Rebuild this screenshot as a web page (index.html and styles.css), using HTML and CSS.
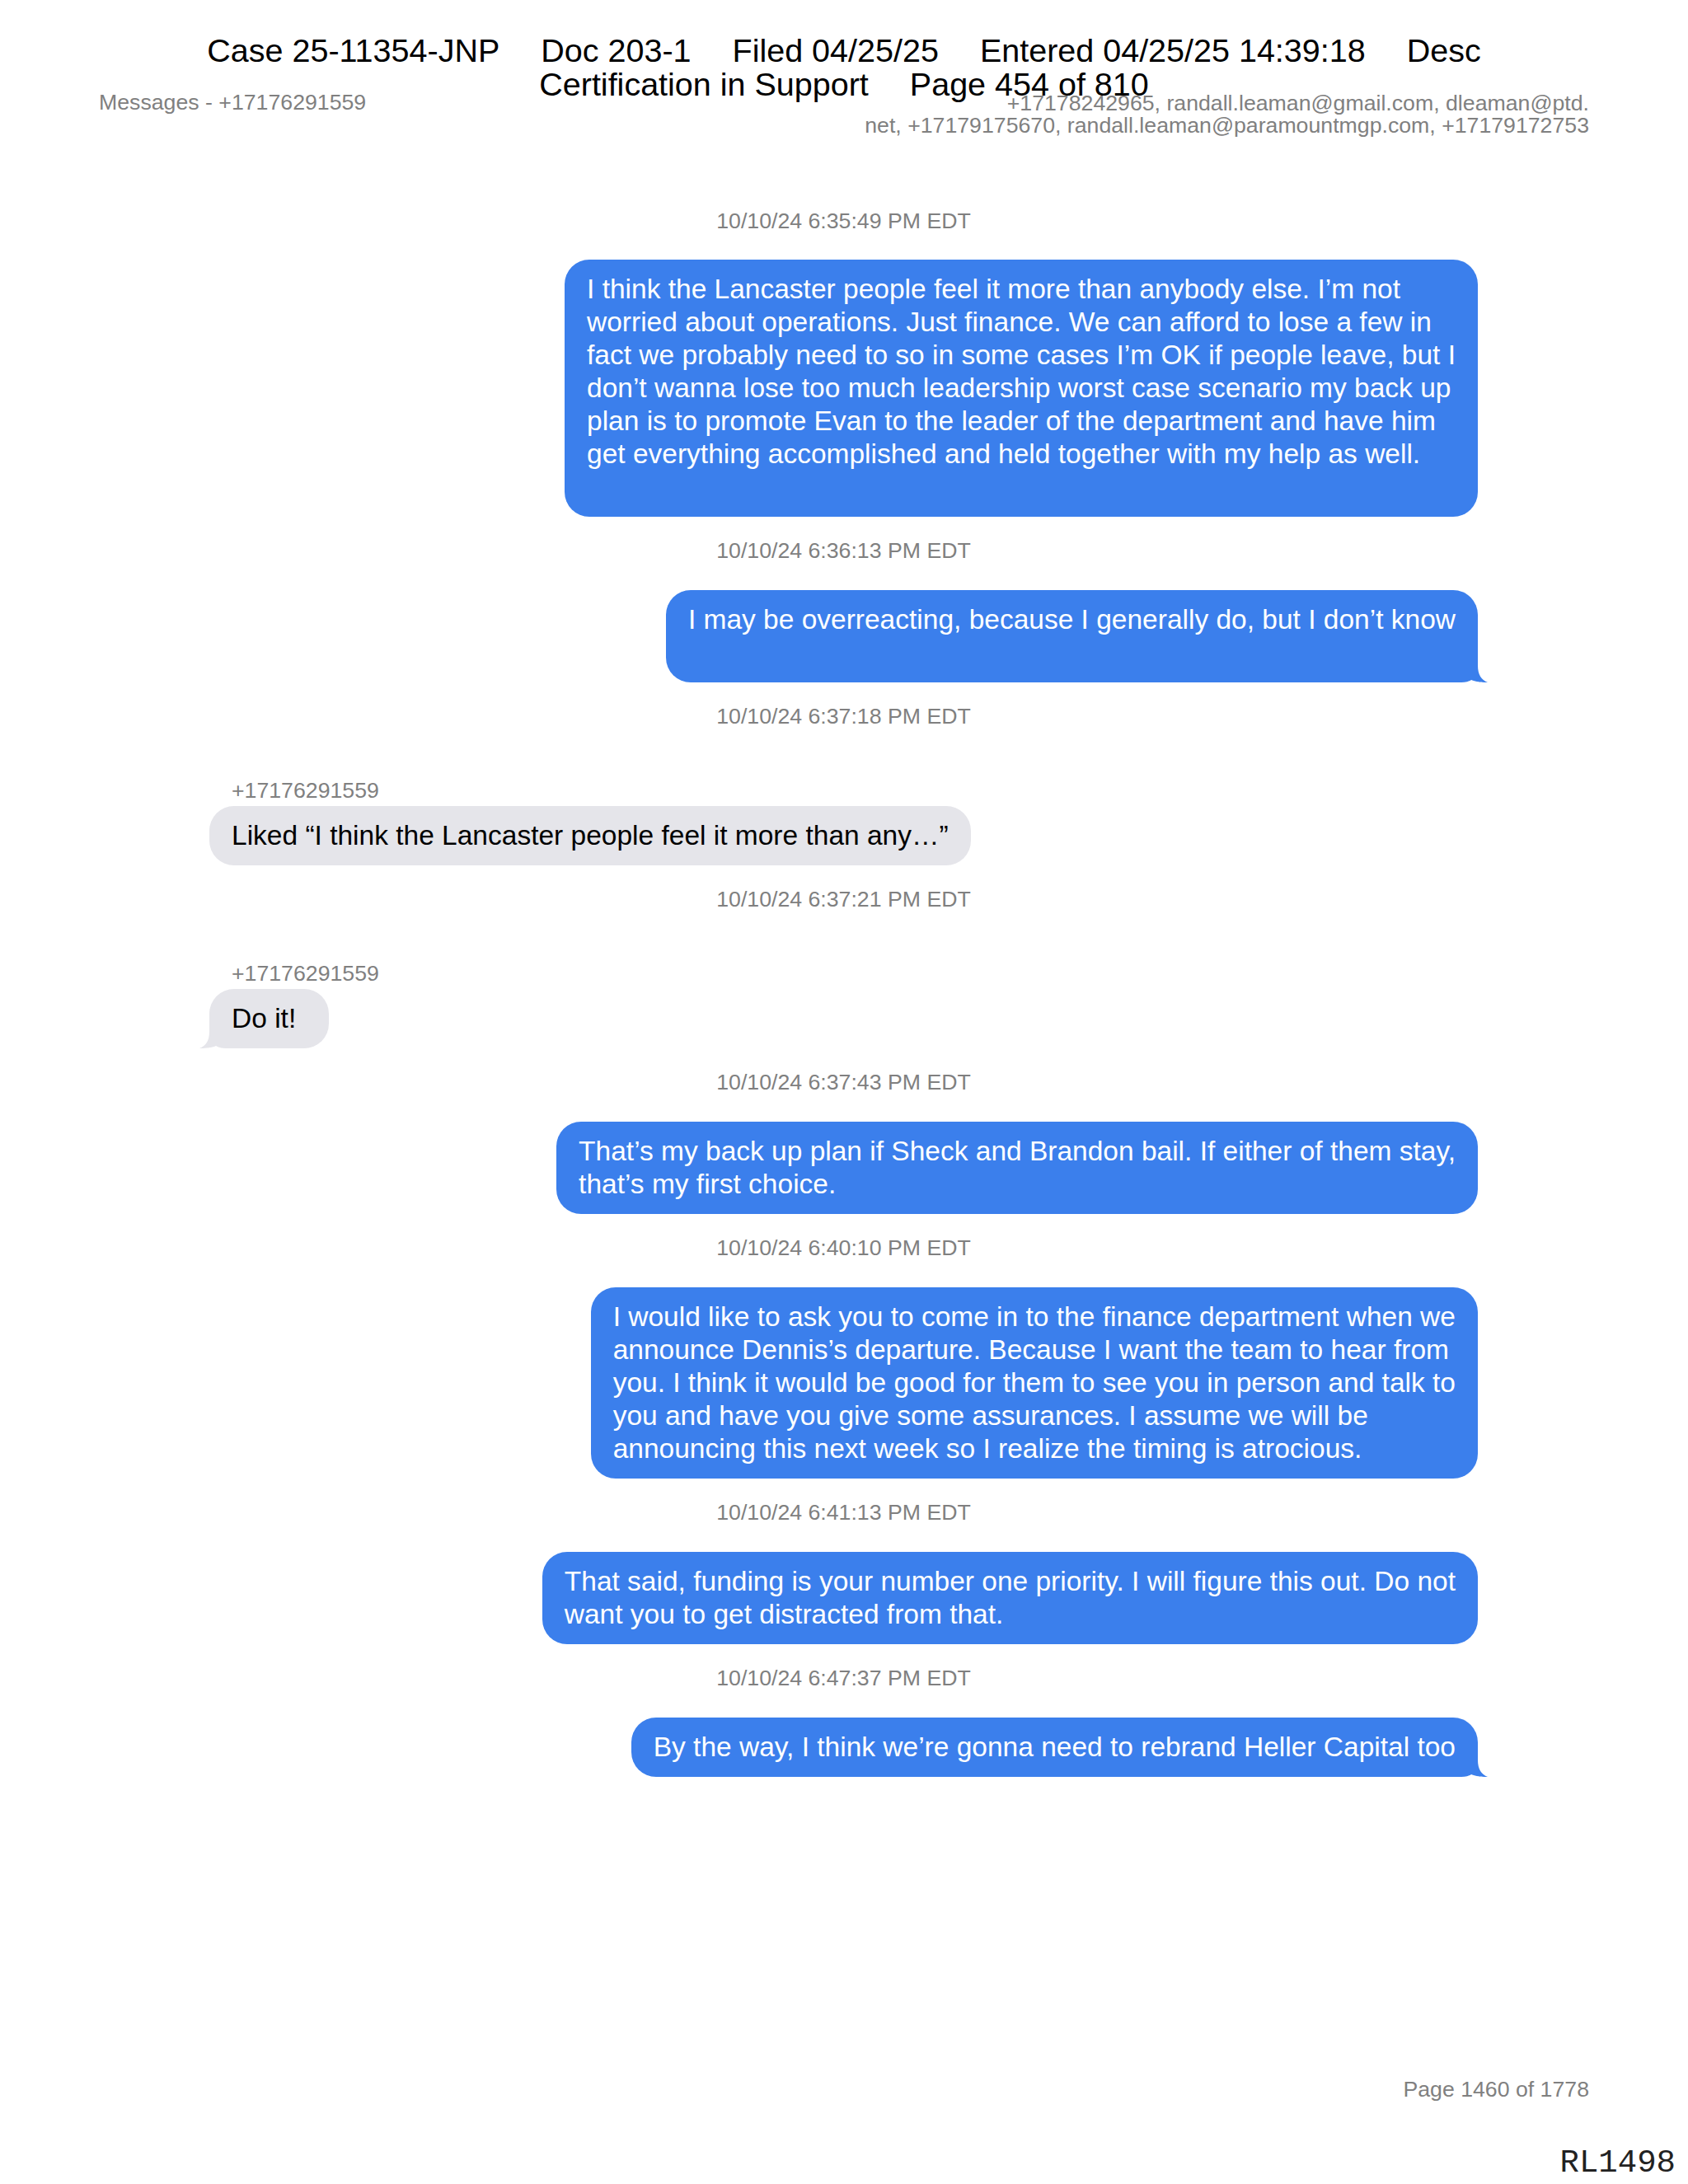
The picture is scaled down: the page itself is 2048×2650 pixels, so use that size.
FILE: index.html
```html
<!DOCTYPE html>
<html>
<head>
<meta charset="utf-8">
<link rel="stylesheet" href="styles.css">
</head>
<body>
<div class="stamp">
  <div class="stamp-line"><span>Case 25-11354-JNP</span><span>Doc 203-1</span><span>Filed 04/25/25</span><span>Entered 04/25/25 14:39:18</span><span>Desc</span></div>
  <div class="stamp-line"><span>Certification in Support</span><span>Page 454 of 810</span></div>
</div>
<div class="page">
  <header class="meta">
    <div class="meta-left">Messages - +17176291559</div>
    <div class="meta-right">+17178242965, randall.leaman@gmail.com, dleaman@ptd.<br>net, +17179175670, randall.leaman@paramountmgp.com, +17179172753</div>
  </header>

  <main class="thread">
    <div class="ts first">10/10/24 6:35:49 PM EDT</div>
    <div class="bubble out">I think the Lancaster people feel it more than anybody else. I’m not<br>worried about operations. Just finance. We can afford to lose a few in<br>fact we probably need to so in some cases I’m OK if people leave, but I<br>don’t wanna lose too much leadership worst case scenario my back up<br>plan is to promote Evan to the leader of the department and have him<br>get everything accomplished and held together with my help as well.<br>&nbsp;</div>

    <div class="ts">10/10/24 6:36:13 PM EDT</div>
    <div class="bubble out tailed">I may be overreacting, because I generally do, but I don’t know<br>&nbsp;<svg class="tail" viewBox="0 0 42 40" width="42" height="40"><path d="M0 0H30V20C30 30 34 37 42 40C35 40.3 26 39 22 37C19 39 15 40 10 40H0Z"/></svg></div>

    <div class="ts">10/10/24 6:37:18 PM EDT</div>
    <div class="incoming">
      <div class="sender">+17176291559</div>
      <div class="bubble in">Liked “I think the Lancaster people feel it more than any…”</div>
    </div>

    <div class="ts">10/10/24 6:37:21 PM EDT</div>
    <div class="incoming">
      <div class="sender">+17176291559</div>
      <div class="bubble in tailed short">Do it!<svg class="tail" viewBox="0 0 42 40" width="42" height="40"><path d="M0 0H30V20C30 30 34 37 42 40C35 40.3 26 39 22 37C19 39 15 40 10 40H0Z"/></svg></div>
    </div>

    <div class="ts">10/10/24 6:37:43 PM EDT</div>
    <div class="bubble out">That’s my back up plan if Sheck and Brandon bail. If either of them stay,<br>that’s my first choice.</div>

    <div class="ts">10/10/24 6:40:10 PM EDT</div>
    <div class="bubble out">I would like to ask you to come in to the finance department when we<br>announce Dennis’s departure. Because I want the team to hear from<br>you. I think it would be good for them to see you in person and talk to<br>you and have you give some assurances. I assume we will be<br>announcing this next week so I realize the timing is atrocious.</div>

    <div class="ts">10/10/24 6:41:13 PM EDT</div>
    <div class="bubble out">That said, funding is your number one priority. I will figure this out. Do not<br>want you to get distracted from that.</div>

    <div class="ts">10/10/24 6:47:37 PM EDT</div>
    <div class="bubble out tailed">By the way, I think we’re gonna need to rebrand Heller Capital too<svg class="tail" viewBox="0 0 42 40" width="42" height="40"><path d="M0 0H30V20C30 30 34 37 42 40C35 40.3 26 39 22 37C19 39 15 40 10 40H0Z"/></svg></div>
  </main>

  <footer class="footer">
    <div class="page-no">Page 1460 of 1778</div>
  </footer>
</div>
<div class="bates">RL1498</div>
</body>
</html>
```

FILE: styles.css
```css
html, body {
  margin: 0;
  padding: 0;
  background: #ffffff;
}

body {
  position: relative;
  width: 2048px;
  min-height: 2650px;
  font-family: "Liberation Sans", Arial, sans-serif;
  color: #000;
}

.stamp {
  position: absolute;
  top: 41px;
  left: 0;
  right: 0;
  font-size: 39.5px;
  line-height: 41px;
  color: #000;
  z-index: 2;
}

.stamp-line {
  display: flex;
  justify-content: center;
  gap: 50px;
  white-space: nowrap;
}

.page {
  padding: 111px 120px 0 120px;
}

.meta {
  display: flex;
  justify-content: space-between;
  align-items: flex-start;
  font-size: 26.7px;
  line-height: 27px;
  color: #808080;
}

.meta-right {
  text-align: right;
  margin-top: 1px;
  white-space: nowrap;
}

.thread {
  padding: 0 135px 0 134px;
  margin-top: 86px;
}

.ts {
  text-align: center;
  font-size: 26.7px;
  line-height: 32px;
  color: #808080;
  margin: 25px 0 32px 0;
}

.ts.first {
  margin-top: 0;
  margin-bottom: 31px;
}

.incoming {
  margin-top: -7px;
  padding-top: 33px;
}

.sender {
  font-size: 26.7px;
  line-height: 32px;
  color: #808080;
  padding-left: 27px;
  margin-bottom: 3px;
}

.bubble {
  position: relative;
  z-index: 0;
  width: fit-content;
  box-sizing: border-box;
  padding: 16px 27px;
  border-radius: 30px;
  font-size: 33.5px;
  line-height: 40px;
  white-space: nowrap;
}

.bubble.short {
  min-width: 145px;
}

.bubble.out {
  margin-left: auto;
  background: #3b7fec;
  color: #ffffff;
}

.bubble.in {
  background: #e5e5ea;
  color: #000000;
}

.tail {
  position: absolute;
  bottom: 0;
  display: block;
  z-index: -1;
}

.out .tail {
  right: -12px;
  fill: #3b7fec;
}

.in .tail {
  left: -12px;
  transform: scaleX(-1);
  fill: #e5e5ea;
}

.footer {
  margin-top: 363px;
  display: flex;
  justify-content: flex-end;
}

.page-no {
  font-size: 26.7px;
  line-height: 32px;
  color: #808080;
}

.bates {
  position: absolute;
  right: 15px;
  top: 2603px;
  font-family: "Liberation Mono", "Courier New", monospace;
  font-size: 39px;
  line-height: 44px;
  color: #222;
}
```
